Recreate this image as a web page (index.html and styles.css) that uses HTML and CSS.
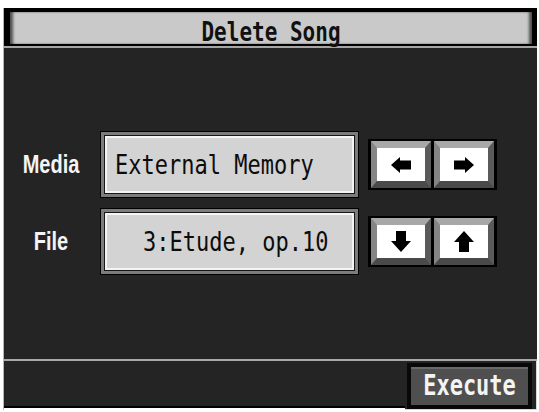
FILE: index.html
```html
<!DOCTYPE html>
<html>
<head>
<meta charset="utf-8">
<link rel="stylesheet" href="styles.css">
</head>
<body>
<div class="screen">
  <div class="title-frame">
    <div class="title"><span class="title-text">Delete Song</span></div>
  </div>
  <div class="main">
    <div class="row">
      <div class="label"><span class="label-text">Media</span></div>
      <div class="field">
        <div class="face"><span class="value">External Memory</span></div>
      </div>
      <div class="arrows">
        <div class="arrow-btn">
          <svg width="20" height="16" viewBox="0 0 20 16"><path d="M0 8 L9 0 V3.5 H20 V12.5 H9 V16 Z"/></svg>
        </div>
        <div class="arrow-btn">
          <svg width="20" height="16" viewBox="0 0 20 16"><path d="M20 8 L11 0 V3.5 H0 V12.5 H11 V16 Z"/></svg>
        </div>
      </div>
    </div>
    <div class="row">
      <div class="label"><span class="label-text">File</span></div>
      <div class="field">
        <div class="face face-indent"><span class="value">3:Etude, op.10</span></div>
      </div>
      <div class="arrows">
        <div class="arrow-btn">
          <svg width="20" height="21" viewBox="0 0 20 21"><path d="M5 0 H15 V10 H20 L10 21 L0 10 H5 Z"/></svg>
        </div>
        <div class="arrow-btn">
          <svg width="20" height="21" viewBox="0 0 20 21"><path d="M10 0 L20 11 H15 V21 H5 V11 H0 Z"/></svg>
        </div>
      </div>
    </div>
  </div>
  <div class="separator"></div>
  <div class="footer">
    <div class="filler"></div>
    <div class="exec-frame">
      <div class="exec"><span class="exec-text">Execute</span></div>
    </div>
  </div>
</div>
</body>
</html>
```

FILE: styles.css
```css
html, body {
  margin: 0;
  padding: 0;
  background: #ffffff;
}

.screen {
  margin: 8px 0 0 3px;
  width: 534px;
  height: 402px;
  box-sizing: border-box;
  border-left: 1px solid #b4b4b4;
  display: flex;
  flex-direction: column;
}

.title-frame {
  background: #000;
  padding: 4px 5px 2px 6px;
  border-bottom: 2px solid #a6a6a6;
}

.title {
  height: 32px;
  box-sizing: border-box;
  padding-top: 9px;
  background: #c9c9c9;
  display: flex;
  justify-content: center;
  align-items: center;
  box-shadow: inset 4px 0 3px -1px rgba(0, 0, 0, 0.6), inset -4px 0 3px -1px rgba(0, 0, 0, 0.6);
}

.title-text {
  display: inline-block;
  font-family: "DejaVu Sans Mono", monospace;
  font-weight: bold;
  font-size: 21px;
  line-height: 1;
  color: #111;
  transform: scaleY(1.3);
}

.main {
  flex: 1;
  background: #242424;
  padding-top: 83px;
  display: flex;
  flex-direction: column;
  gap: 10px;
}

.row {
  display: flex;
  align-items: center;
  height: 67px;
  padding-left: 10px;
}

.label {
  width: 74px;
  margin-right: 12px;
  text-align: center;
}

.label-text {
  display: inline-block;
  font-family: "Liberation Sans", Arial, sans-serif;
  font-weight: bold;
  font-size: 20px;
  line-height: 1;
  color: #f4f4f4;
  transform: scaleY(1.3);
}

.field {
  width: 259px;
  height: 67px;
  box-sizing: border-box;
  border: 1px solid #000;
  padding: 3px;
  background: #7c7c7c;
}

.face {
  height: 100%;
  box-sizing: border-box;
  border: 1px solid #161616;
  box-shadow: inset 0 0 0 2px #f4f4f4;
  background: #d3d3d3;
  display: flex;
  align-items: center;
  padding-left: 10px;
}

.face-indent {
  padding-left: 38px;
}

.value {
  display: inline-block;
  font-family: "DejaVu Sans Mono", monospace;
  font-size: 22px;
  line-height: 1;
  color: #0c0c0c;
  transform: scaleY(1.22);
}

.arrows {
  margin-left: 9px;
  display: flex;
  gap: 3px;
  padding: 2px 3px;
  background: #000;
}

.arrow-btn {
  width: 48px;
  height: 33px;
  border-style: solid;
  border-width: 7px 6px;
  border-color: #a8a8a8 #5a5a5a #4a4a4a #858585;
  background: #fff;
  display: flex;
  align-items: center;
  justify-content: center;
}

.arrow-btn svg {
  fill: #000;
  display: block;
}

.separator {
  height: 2px;
  background: #a8a8a8;
}

.footer {
  height: 49px;
  display: flex;
  align-items: flex-start;
}

.filler {
  flex: 1;
  height: 47px;
  box-sizing: border-box;
  background: #242424;
  border-bottom: 2px solid #000;
}

.exec-frame {
  width: 132px;
  height: 49px;
  box-sizing: border-box;
  background: #242424;
  border-right: 1px solid #d8d8d8;
  border-bottom: 1px solid #d8d8d8;
  padding: 2px 0 0 2px;
}

.exec {
  width: 125px;
  height: 46px;
  box-sizing: border-box;
  border: 4px solid #080808;
  background: #4f4f4f;
  box-shadow: inset 0 2px 0 #6a6a6a;
  display: flex;
  align-items: center;
  justify-content: center;
}

.exec-text {
  display: inline-block;
  font-family: "DejaVu Sans Mono", monospace;
  font-weight: bold;
  font-size: 22px;
  line-height: 1;
  color: #f4f4f4;
  transform: scaleY(1.25);
}
```
